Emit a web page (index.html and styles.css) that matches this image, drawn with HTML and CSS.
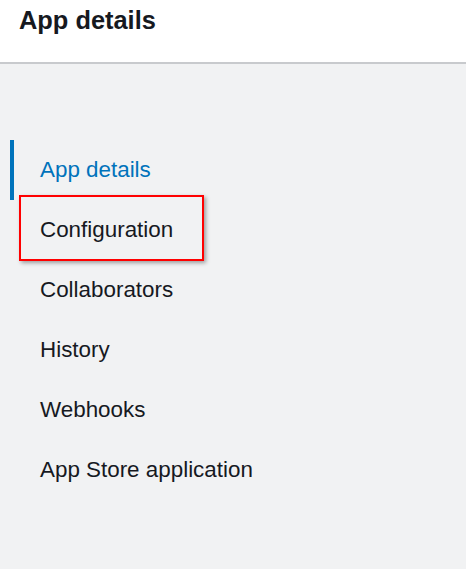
FILE: index.html
```html
<!DOCTYPE html>
<html>
<head>
<meta charset="utf-8">
<link rel="stylesheet" href="styles.css">
</head>
<body>
<header class="header">
  <h1 class="title">App details</h1>
</header>
<main class="content">
  <nav class="side-nav">
    <a class="nav-item active">App details</a>
    <a class="nav-item">Configuration</a>
    <a class="nav-item">Collaborators</a>
    <a class="nav-item">History</a>
    <a class="nav-item">Webhooks</a>
    <a class="nav-item">App Store application</a>
  </nav>
  <div class="highlight"></div>
</main>
</body>
</html>
```
FILE: styles.css
```css
html, body {
  margin: 0;
  padding: 0;
  height: 100%;
}
body {
  font-family: "Liberation Sans", Arial, sans-serif;
  background: #f1f2f3;
  color: #16191f;
  overflow: hidden;
}
.header {
  background: #ffffff;
  height: 64px;
  border-bottom: 2px solid #c8cacd;
  box-sizing: border-box;
  padding-left: 19px;
}
.title {
  margin: 0;
  font-size: 25.4px;
  font-weight: 700;
  line-height: 41px;
  color: #16191f;
}
.content {
  position: relative;
  padding-top: 76px;
}
.side-nav {
  display: flex;
  flex-direction: column;
  margin-left: 10px;
}
.nav-item {
  display: block;
  height: 60px;
  line-height: 60px;
  font-size: 22.4px;
  padding-left: 26px;
  border-left: 4px solid transparent;
  color: #16191f;
  text-decoration: none;
}
.nav-item.active {
  border-left-color: #0073bb;
  color: #0073bb;
}
.highlight {
  position: absolute;
  left: 19px;
  top: 131px;
  width: 181px;
  height: 62px;
  border: 2px solid #ff0000;
  box-shadow: 2px 2px 4px rgba(0, 0, 0, 0.35);
}
```
